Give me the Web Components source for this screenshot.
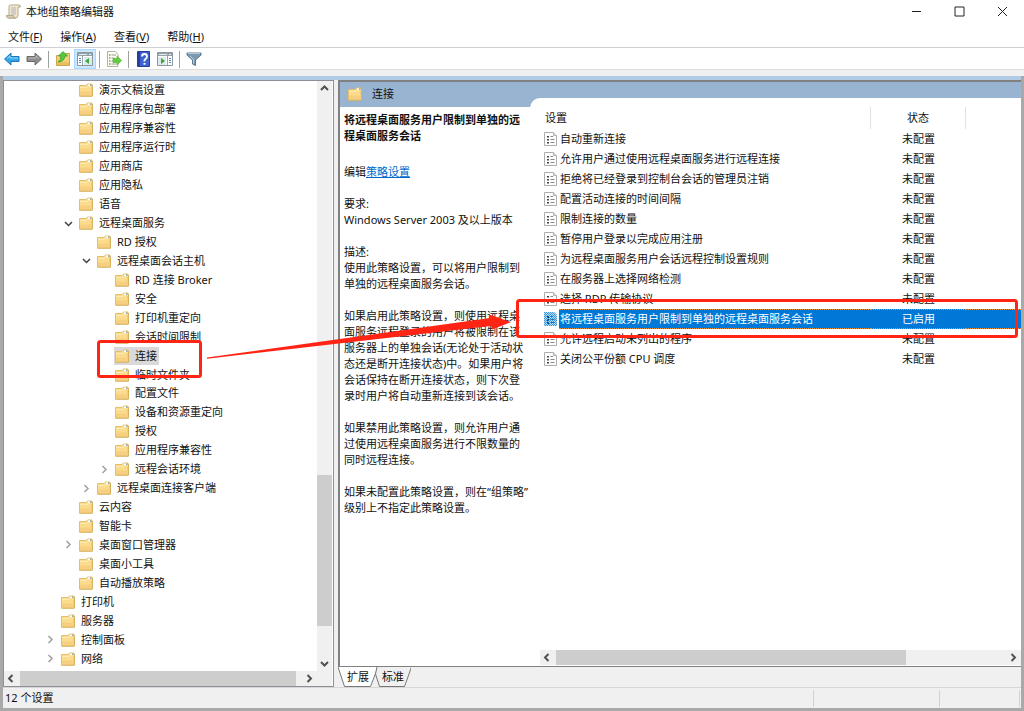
<!DOCTYPE html>
<html lang="zh-CN">
<head>
<meta charset="utf-8">
<title>本地组策略编辑器</title>
<style>
  body {
    margin: 0;
    font: 11px/16px "Noto Sans", "Noto Sans CJK SC", sans-serif;
    color: #111;
  }
</style>
</head>
<body>
<policy-window></policy-window>

<script>
const RESET = /*html*/`
  <style>
    * { box-sizing: border-box; }
    button {
      font: inherit;
      color: inherit;
      background: none;
      border: 0;
      padding: 0;
      margin: 0;
    }
    svg { display: block; }
  </style>`;

const FOLDER = /*html*/`
  <svg width="14" height="14" viewBox="0 0 14 14">
    <path d="M.5 2.500H7L8.500 1H13v12H.5z" fill="#fbdc8c" stroke="#e3bf6c"/>
    <path d="M1 8.500h12V13H1z" fill="#f6d080"/>
    <path d="M1 4.500h7L9.500 3H13" fill="none" stroke="#fdebb5"/>
    <path d="M9 1.500h2v1.500H9z" fill="#fff"/>
    <path d="M11 1.500h1.500v1.500H11z" fill="#86aac0"/>
    <path d="M.5 13.200h13V2" fill="none" stroke="#d6b261"/>
  </svg>`;

const PAGE = /*html*/`
  <svg width="13" height="14" viewBox="0 0 13 14">
    <path d="M.5.5h9l3 3v10H.5z" fill="#fdfdfd" stroke="#adadad"/>
    <path d="M9.500.5v3h3" fill="#ddd" stroke="#b5b5b5"/>
    <path d="M3 4h2v1.500H3zM3 7h2v1.500H3zM3 10h2v1.500H3z" fill="#444"/>
    <path d="M6.500 4.500H9M6.500 7.500h4M6.500 10.500h4" stroke="#888"/>
  </svg>`;

const PAGE_SELECTED = /*html*/`
  <svg width="13" height="14" viewBox="0 0 13 14">
    <defs>
      <pattern id="dots" width="2" height="2" patternUnits="userSpaceOnUse">
        <path d="M0 0h1v1H0zM1 1h1v1H1z" fill="#0078d7"/>
      </pattern>
    </defs>
    <path d="M0 0h10l3 3v11H0z" fill="#b9dcf7"/>
    <path d="M3 4h2v2H3zM3 7h2v2H3zM3 10h2v2H3z" fill="#123e6b"/>
    <path d="M6.500 4.500H9M6.500 7.500h4M6.500 10.500h4" stroke="#2c6ca8"/>
    <path d="M0 0h10l3 3v11H0z" fill="url(#dots)" opacity=".7"/>
  </svg>`;

const CHEVRONS = {
  left: "M7.500 3 4 6.500 7.500 10",
  right: "M4.500 3 8 6.500 4.500 10",
  up: "M3 8 6.500 4.500 10 8",
  down: "M3 5 6.500 8.500 10 5",
};

const chevron = (dir, color, width) => `
  <svg width="13" height="13" viewBox="0 0 13 13">
    <path d="${CHEVRONS[dir]}" fill="none" stroke="${color}" stroke-width="${width}"/>
  </svg>`;

// Small helper so every element attaches its shadow root the same way
const define = (name, html) => {
  customElements.define(name, class extends HTMLElement {
    constructor() {
      super();
      this.attachShadow({ mode: "open" });
    }

    connectedCallback() {
      this.shadowRoot.innerHTML = RESET + (typeof html === "function" ? html(this) : html);
    }
  });
};

define("title-bar", /*html*/`
  <style>
    :host { display: flex; align-items: center; height: 23px; padding-left: 6px; background: #fff; }
    h1 { flex: 1; margin: 0 0 0 5px; font-size: 11px; font-weight: 400; }
    button { width: 43px; height: 22px; display: grid; place-items: center; }
  </style>
  <svg width="15" height="15" viewBox="0 0 15 15">
    <path d="M4.500 1h8.500q1.500 0 1.500 2H12v8q0 3-2.500 3H2.500Q.5 14 .5 11.500H3V2.500Q3 1 4.500 1z" fill="#f1e8d2" stroke="#b5a88c"/>
    <path d="M.5 11.500h7q0 2.500 2 2.500h-7Q.5 14 .5 11.500z" fill="#dccfb0" stroke="#b5a88c"/>
    <path d="M5 4h5M5 6h5M5 8h5M5 10h5" stroke="#b3b1b8"/>
  </svg>
  <h1>本地组策略编辑器</h1>
  <button aria-label="最小化"><svg width="11" height="11"><path d="M1 5.500h9" stroke="#222"/></svg></button>
  <button aria-label="最大化"><svg width="11" height="11"><path d="M1 1h9v9H1z" fill="none" stroke="#222"/></svg></button>
  <button aria-label="关闭"><svg width="11" height="11"><path d="M1 1l9 9M10 1l-9 9" stroke="#222"/></svg></button>
`);

define("menu-bar", /*html*/`
  <style>
    :host { display: flex; gap: 18px; padding: 6px 8px 2px; background: #fff; border-bottom: 1px solid #cfcfd4; }
  </style>
  <button>文件(<u>F</u>)</button>
  <button>操作(<u>A</u>)</button>
  <button>查看(<u>V</u>)</button>
  <button>帮助(<u>H</u>)</button>
`);

define("tool-bar", /*html*/`
  <style>
    :host { display: flex; height: 22px; padding: 1px; background: #fff; border-bottom: 1px solid #dcdcdc; }
    button { width: 22px; height: 20px; display: grid; place-items: center; }
    .on { background: #cce8ff; border: 1px solid #a8d8ff; }
    i { width: 1px; height: 17px; margin: 2px 3px; background: #a0a0a0; }
  </style>
  <button aria-label="后退"><svg width="16" height="14" viewBox="0 0 16 14"><path d="M.5 7 7 1v3.500h8v5H7V13z" fill="#35a5ea" stroke="#1b78bd"/><path d="M3 6.500 6 4v2h8" fill="none" stroke="#93d7fa"/></svg></button>
  <button aria-label="前进"><svg width="16" height="14" viewBox="0 0 16 14"><path d="M15.500 7 9 1v3.500H1v5h8V13z" fill="#8e8e8e" stroke="#6b6b6b"/><path d="M2 6h8V4l3 2.500" fill="none" stroke="#b9b9b9"/></svg></button>
  <i></i>
  <button aria-label="向上"><svg width="16" height="16" viewBox="0 0 16 16"><path d="M1.500 4.500H8L10 2.500h4.500v12h-13z" fill="#f3d17b" stroke="#cfa549"/><path d="M2 11h12v3H2z" fill="#e8bf60"/><path d="M3 11Q6 9 6 5H3.500L8 .5 12.500 5H10q-1 6-7 6z" fill="#53c93e" stroke="#2c9a24" stroke-width=".7"/></svg></button>
  <button class="on" aria-label="显示树"><svg width="16" height="14" viewBox="0 0 16 14"><path d="M.5.5h15v13H.5z" fill="#fff" stroke="#8c979f"/><path d="M1 1h14v3H1z" fill="#93a1ab"/><path d="M2 2.500h8M12 2.500h2" stroke="#e4eaef"/><path d="M5.500 4v9" stroke="#97a5ae"/><path d="M2 6.500h2M2 8.500h2M2 10.500h2" stroke="#5686bf"/><path d="M7 5h8v8H7z" fill="#dfe8ed"/><path d="M12 6v6L8 9z" fill="#38a832"/></svg></button>
  <i></i>
  <button aria-label="导出列表"><svg width="16" height="16" viewBox="0 0 16 16"><path d="M1.500.5h8l2.500 3v12H1.500z" fill="#fffdf0" stroke="#b5b2a5"/><path d="M3 4h1.500M3 7h1.500M3 10h1.500M3 13h1.500" stroke="#555"/><path d="M5.500 4H10M5.500 7h3M5.500 10h2M5.500 13H10" stroke="#999"/><path d="M7 7.500h4V5l4.500 4.500L11 14v-2.500H7z" fill="#63cf40" stroke="#4fb836" stroke-width=".7"/></svg></button>
  <i></i>
  <button aria-label="帮助"><svg width="13" height="16" viewBox="0 0 13 16"><path d="M.5.5h12v15H.5z" fill="#3e63cf" stroke="#263f97"/><path d="M1 1h2v14H1z" fill="#253f9c"/><path d="M5 5.500Q5 3 7.500 3T10 5.500Q10 7 8.500 8T7.500 10.500" fill="none" stroke="#fff" stroke-width="1.800"/><path d="M6.500 12h2v1.700h-2z" fill="#fff"/></svg></button>
  <button aria-label="操作窗格"><svg width="16" height="14" viewBox="0 0 16 14"><path d="M.5.5h15v13H.5z" fill="#fff" stroke="#8c979f"/><path d="M1 1h14v3H1z" fill="#93a1ab"/><path d="M2 2.500h8M12 2.500h2" stroke="#e4eaef"/><path d="M10.500 4v9" stroke="#97a5ae"/><path d="M12 6.500h2M12 8.500h2M12 10.500h2" stroke="#5686bf"/><path d="M1 5h8v8H1z" fill="#dfe8ed"/><path d="M4 6v6l4-3z" fill="#38a832"/></svg></button>
  <i></i>
  <button aria-label="筛选"><svg width="16" height="14" viewBox="0 0 16 14"><path d="M1 1h14v2L9.500 8v5.500L6.500 12V8L1 3z" fill="#7b9ab1" stroke="#5d7688"/><path d="M2 1.500h12" stroke="#b4c8d5"/><path d="M4 4l3.500 3.500v4" fill="none" stroke="#c3d5e0"/></svg></button>
`);

// direction, and how much of the track lies before, in and after the thumb
define("scroll-bar", (el) => {
  const vertical = el.getAttribute("direction") === "vertical";
  const [before, thumb, after] = el.getAttribute("parts").split(" ");
  return /*html*/`
    <style>
      :host { display: flex; flex-direction: ${vertical ? "column" : "row"}; background: #f0f0f0; }
      button { flex: none; width: 15px; height: 15px; display: grid; place-items: center; }
      .before { flex: ${before}; }
      .thumb { flex: ${thumb}; background: #cdcdcd; }
      .after { flex: ${after}; }
    </style>
    <button aria-label="${vertical ? "向上滚动" : "向左滚动"}">${chevron(vertical ? "up" : "left", "#505050", 2)}</button>
    <div class="before"></div><div class="thumb"></div><div class="after"></div>
    <button aria-label="${vertical ? "向下滚动" : "向右滚动"}">${chevron(vertical ? "down" : "right", "#505050", 2)}</button>`;
});

define("tree-item", (el) => {
  const level = Number(el.getAttribute("level"));
  const state = el.getAttribute("state");
  let twist = "";
  if (state === "open") twist = chevron("down", "#404040", 1.5);
  if (state === "closed") twist = chevron("right", "#a0a0a0", 1.5);
  return /*html*/`
    <style>
      :host { display: flex; flex: 1; align-items: center; min-height: 18px; padding-left: ${40 + level * 18}px; white-space: nowrap; }
      .twist { flex: none; width: 16px; }
      .label { display: flex; align-items: center; gap: 6px; height: 18px; padding: 0 2px 0 1px; }
      :host([selected]) .label { background: #d9d9d9; }
    </style>
    <span class="twist">${twist}</span>
    <span class="label">${FOLDER}<slot></slot></span>`;
});

const TREE = [
  [1, "演示文稿设置"],
  [1, "应用程序包部署"],
  [1, "应用程序兼容性"],
  [1, "应用程序运行时"],
  [1, "应用商店"],
  [1, "应用隐私"],
  [1, "语音"],
  [1, "远程桌面服务", "open"],
  [2, "RD 授权"],
  [2, "远程桌面会话主机", "open"],
  [3, "RD 连接 Broker"],
  [3, "安全"],
  [3, "打印机重定向"],
  [3, "会话时间限制"],
  [3, "连接", "selected"],
  [3, "临时文件夹"],
  [3, "配置文件"],
  [3, "设备和资源重定向"],
  [3, "授权"],
  [3, "应用程序兼容性"],
  [3, "远程会话环境", "closed"],
  [2, "远程桌面连接客户端", "closed"],
  [1, "云内容"],
  [1, "智能卡"],
  [1, "桌面窗口管理器", "closed"],
  [1, "桌面小工具"],
  [1, "自动播放策略"],
  [0, "打印机"],
  [0, "服务器"],
  [0, "控制面板", "closed"],
  [0, "网络", "closed"],
];

define("tree-pane", () => /*html*/`
  <style>
    :host {
      display: grid;
      grid-template: 1fr 15px / 1fr 15px;
      padding-right: 1px;
      background: #fff;
      border: 1px solid #8c8f96;
    }
    .items { display: flex; flex-direction: column; padding-bottom: 3px; }
    .corner { background: #f0f0f0; }
  </style>
  <div class="items" role="tree">
    ${TREE.map(([level, text, state]) => `
      <tree-item role="treeitem" level="${level}" ${state === "selected" ? "selected" : `state="${state || ""}"`}>${text}</tree-item>`).join("")}
  </div>
  <scroll-bar direction="vertical" parts="378 150 30"></scroll-bar>
  <scroll-bar direction="horizontal" parts="1 274 6"></scroll-bar>
  <div class="corner"></div>
`);

define("policy-description", /*html*/`
  <style>
    :host { display: block; padding: 5px 0 0 4px; white-space: nowrap; }
    h2 { margin: 0 0 20px; font-size: 11px; font-weight: 700; }
    p { margin: 0 0 16px; }
    a { color: #0066cc; }
  </style>
  <h2>将远程桌面服务用户限制到单独的远<br>程桌面服务会话</h2>
  <p>编辑<a href="#policy">策略设置</a></p>
  <p>要求:<br>Windows Server 2003 及以上版本</p>
  <p>描述:<br>使用此策略设置，可以将用户限制到<br>单独的远程桌面服务会话。</p>
  <p>如果启用此策略设置，则使用远程桌<br>面服务远程登录的用户将被限制在该<br>服务器上的单独会话(无论处于活动状<br>态还是断开连接状态)中。如果用户将<br>会话保持在断开连接状态，则下次登<br>录时用户将自动重新连接到该会话。</p>
  <p>如果禁用此策略设置，则允许用户通<br>过使用远程桌面服务进行不限数量的<br>同时远程连接。</p>
  <p>如果未配置此策略设置，则在“组策略”<br>级别上不指定此策略设置。</p>
`);

const SETTINGS = [
  ["自动重新连接", "未配置"],
  ["允许用户通过使用远程桌面服务进行远程连接", "未配置"],
  ["拒绝将已经登录到控制台会话的管理员注销", "未配置"],
  ["配置活动连接的时间间隔", "未配置"],
  ["限制连接的数量", "未配置"],
  ["暂停用户登录以完成应用注册", "未配置"],
  ["为远程桌面服务用户会话远程控制设置规则", "未配置"],
  ["在服务器上选择网络检测", "未配置"],
  ["选择 RDP 传输协议", "未配置"],
  ["将远程桌面服务用户限制到单独的远程桌面服务会话", "已启用"],
  ["允许远程启动未列出的程序", "未配置"],
  ["关闭公平份额 CPU 调度", "未配置"],
];

const settingRow = ([name, status]) => {
  const selected = status === "已启用";
  return `
    <tr class="${selected ? "selected" : ""}">
      <td class="icon">${selected ? PAGE_SELECTED : PAGE}</td>
      <td>${name}</td><td class="status">${status}</td><td></td>
    </tr>`;
};

define("settings-table", () => /*html*/`
  <style>
    :host { display: block; }
    table { width: 100%; border-collapse: separate; border-spacing: 0; table-layout: fixed; }
    th, td { height: 20px; padding: 0 0 0 1px; font-weight: 400; text-align: left; white-space: nowrap; }
    th { height: 22px; padding-left: 5px; }
    th.name, th.status { border-right: 1px solid #e2e2e2; }
    td.icon { padding-left: 4px; }
    th.status, td.status { padding: 0; text-align: center; }
    .selected td:not(.icon) {
      color: #fff;
      background: #0078d7;
      border-top: 1px dotted #e8943c;
      border-bottom: 1px dotted #e8943c;
    }
  </style>
  <table>
    <colgroup><col style="width:19px"><col><col style="width:95px"><col style="width:55px"></colgroup>
    <thead><tr><th class="name" colspan="2">设置</th><th class="status">状态</th><th></th></tr></thead>
    <tbody>${SETTINGS.map(settingRow).join("")}</tbody>
  </table>
`);

define("detail-pane", /*html*/`
  <style>
    :host {
      display: grid;
      grid-template-columns: 190px 1fr;
      background: linear-gradient(#99b4d1 25px, #fff 25px);
      border: solid #808080;
      border-width: 2px 0 1px 2px;
    }
    header { display: flex; align-items: center; gap: 10px; height: 25px; padding: 0 0 1px 8px; }
    .list {
      display: flex;
      flex-direction: column;
      justify-content: space-between;
      margin-top: 16px;
      padding: 9px 0 1px 10px;
      background: #fff;
      border-top-left-radius: 10px;
    }
  </style>
  <section>
    <header>${FOLDER}<span>连接</span></header>
    <policy-description></policy-description>
  </section>
  <section class="list">
    <settings-table></settings-table>
    <scroll-bar direction="horizontal" parts="1 349 100"></scroll-bar>
  </section>
`);

define("tab-strip", /*html*/`
  <style>
    :host { display: flex; height: 20px; }
    button { position: relative; width: 40px; height: 20px; }
    button + button { width: 36px; margin-left: -3px; }
    button svg { position: absolute; inset: 0; }
    span { position: relative; }
  </style>
  <button role="tab" aria-selected="true">
    <svg width="40" height="20"><path d="M0 0 6.500 19.500h26L40 0" fill="#fff" stroke="#777"/></svg><span>扩展</span>
  </button>
  <button role="tab">
    <svg width="36" height="20"><path d="M2 0 .5 7 4.500 19.500h25L36.500 0" fill="#f0f0f0" stroke="#777"/></svg><span>标准</span>
  </button>
`);

define("status-bar", /*html*/`
  <style>
    :host { display: flex; height: 21px; padding: 2px 1px 1px 2px; background: #f0f0f0; border-top: 1px solid #d7d7d7; }
    div { border-right: 1px solid #d2d2d2; }
    .text { flex: 1; }
    .wide { width: 126px; }
    .narrow { width: 80px; }
  </style>
  <div class="text"><slot></slot></div>
  <div class="wide"></div>
  <div class="narrow"></div>
`);

// Red marks drawn over the window
define("callout-marks", /*html*/`
  <style>
    :host { position: absolute; top: 0; left: 0; pointer-events: none; }
  </style>
  <svg width="1024" height="400" viewBox="0 0 1024 400">
    <rect x="98.500" y="341.500" width="102" height="35" rx="2" fill="none" stroke="#ff2414" stroke-width="3"/>
    <rect x="517.500" y="300.500" width="499" height="36" rx="2" fill="none" stroke="#ff2414" stroke-width="3"/>
    <path d="M207 357.500 490 318l-1-3.500 22 7.500-19 7.500-1-3.500L207 358.700z" fill="#ff2414"/>
  </svg>
`);

define("policy-window", /*html*/`
  <style>
    :host { position: relative; display: flex; flex-direction: column; min-height: 100vh; background: #f0f0f0; }
    .frame {
      flex: 1;
      display: flex;
      flex-direction: column;
      margin-top: 6px;
      border: solid #a9a9a9;
      border-width: 0 3px 3px;
    }
    .panes { flex: 1; display: flex; gap: 4px; border-top: 4px solid #b1cbe5; }
    tree-pane { flex: 0 0 331px; }
    .right { flex: 1; display: flex; flex-direction: column; }
    detail-pane { flex: 1; }
  </style>
  <title-bar></title-bar>
  <menu-bar></menu-bar>
  <tool-bar></tool-bar>
  <div class="frame">
    <div class="panes">
      <tree-pane></tree-pane>
      <div class="right">
        <detail-pane></detail-pane>
        <tab-strip></tab-strip>
      </div>
    </div>
    <status-bar>12 个设置</status-bar>
  </div>
  <callout-marks></callout-marks>
`);
</script>
</body>
</html>
